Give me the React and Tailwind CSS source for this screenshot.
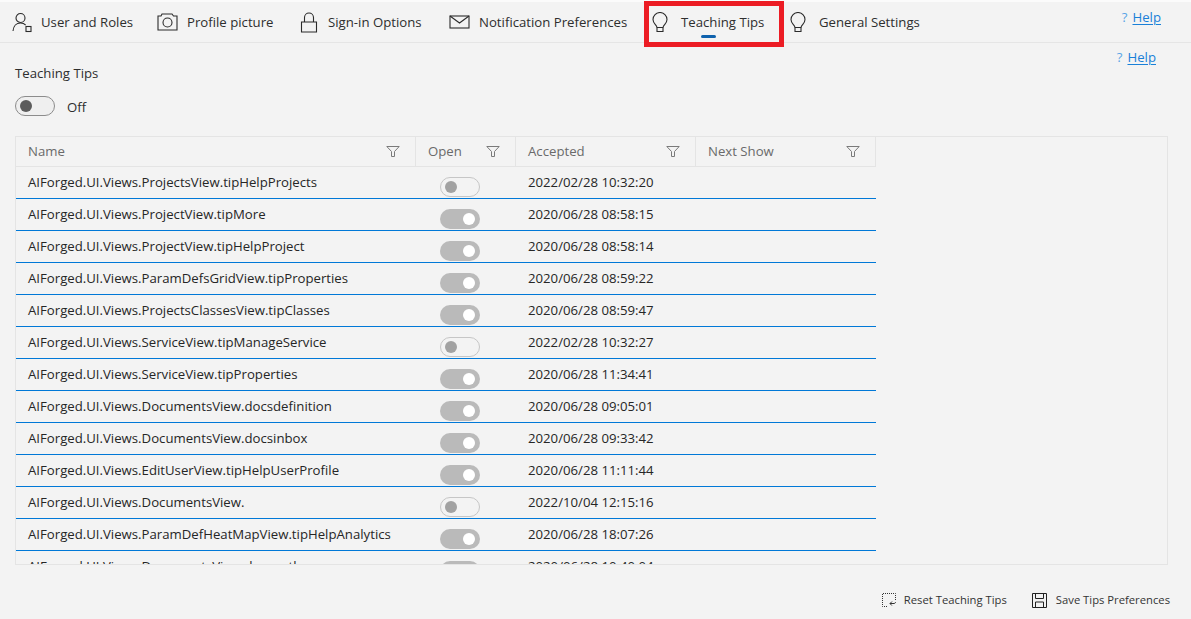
import React from "react";

const rows = [
  ["AIForged.UI.Views.ProjectsView.tipHelpProjects", false, "2022/02/28 10:32:20"],
  ["AIForged.UI.Views.ProjectView.tipMore", true, "2020/06/28 08:58:15"],
  ["AIForged.UI.Views.ProjectView.tipHelpProject", true, "2020/06/28 08:58:14"],
  ["AIForged.UI.Views.ParamDefsGridView.tipProperties", true, "2020/06/28 08:59:22"],
  ["AIForged.UI.Views.ProjectsClassesView.tipClasses", true, "2020/06/28 08:59:47"],
  ["AIForged.UI.Views.ServiceView.tipManageService", false, "2022/02/28 10:32:27"],
  ["AIForged.UI.Views.ServiceView.tipProperties", true, "2020/06/28 11:34:41"],
  ["AIForged.UI.Views.DocumentsView.docsdefinition", true, "2020/06/28 09:05:01"],
  ["AIForged.UI.Views.DocumentsView.docsinbox", true, "2020/06/28 09:33:42"],
  ["AIForged.UI.Views.EditUserView.tipHelpUserProfile", true, "2020/06/28 11:11:44"],
  ["AIForged.UI.Views.DocumentsView.", false, "2022/10/04 12:15:16"],
  ["AIForged.UI.Views.ParamDefHeatMapView.tipHelpAnalytics", true, "2020/06/28 18:07:26"],
  ["AIForged.UI.Views.DocumentsView.docsauth", true, "2020/06/28 10:40:04"],
];

const S = { fill: "none", stroke: "#2b2b2b", strokeWidth: 1.1 };

const UserIcon = () => (
  <svg width="21" height="21" viewBox="0 0 21 21" {...S}>
    <circle cx="8.5" cy="6" r="4.5" />
    <path d="M1 19c.4-4.8 3.4-8 7.5-8 2.2 0 4 .8 5.2 2.2" />
    <rect x="14" y="14.5" width="5" height="5" />
  </svg>
);
const CameraIcon = () => (
  <svg width="21" height="18" viewBox="0 0 21 18" {...S}>
    <path d="M1 3h3l1-2h10l1.500 2H20v14H1z" />
    <circle cx="10.500" cy="9.500" r="4.500" />
  </svg>
);
const LockIcon = () => (
  <svg width="18" height="21" viewBox="0 0 18 21" {...S}>
    <path d="M1.500 10h15v10h-15z" />
    <path d="M4.500 10V5.500a4.500 4.500 0 0 1 9 0V10" />
  </svg>
);
const MailIcon = () => (
  <svg width="21" height="14" viewBox="0 0 21 14" {...S}>
    <rect x="1" y="1" width="19" height="12" />
    <path d="M1 1l9.500 7L20 1" />
  </svg>
);
const BulbIcon = () => (
  <svg width="16" height="21" viewBox="0 0 16 21" {...S}>
    <path d="M5 15.500C4.500 12.500 1 11.500 1 7.500a7 7 0 0 1 14 0c0 4-3.500 5-4 8z" />
    <path d="M5 15.500V19.500h6V15.500" />
  </svg>
);
const FilterIcon = () => (
  <svg width="14" height="11" viewBox="0 0 14 11" fill="none" stroke="#7a7a7a" strokeWidth="1">
    <path d="M.8.500h12.400L8.500 5.500v5h-3v-5z" />
  </svg>
);
const ResetIcon = () => (
  <svg width="16" height="16" viewBox="0 0 16 16" fill="none" stroke="#333" strokeWidth="1">
    <path d="M6 14.500H1.500v-13h13V8" strokeDasharray="1 1" />
    <path d="M9 11.500h4c1 0 1.500-.7 1.500-1.500M9 11.500l2-2M9 11.500l1.800 2" />
  </svg>
);
const SaveIcon = () => (
  <svg width="15" height="15" viewBox="0 0 15 15" fill="none" stroke="#222" strokeWidth="1">
    <path d="M.5.500h14v14H.5z" />
    <path d="M3.500.500v5h8v-5M3.500 14.500v-5.500h8v5.500" />
  </svg>
);

function Tab({ icon, label, width, offset, active }) {
  return (
    <div className={`${width} relative flex h-full shrink-0 items-center`}>
      <div className={`${offset} flex shrink-0 items-center`}>{icon}</div>
      <span className="pt-[2px] text-[13.2px] whitespace-nowrap text-[#2e2e2e]">{label}</span>
      {active && <div className="absolute top-[33px] left-[49px] h-[3px] w-[15px] rounded-full bg-[#0f62ad]" />}
    </div>
  );
}

function HelpLink() {
  return (
    <span className="flex items-center gap-[5px] text-[13.2px]">
      <span className="text-[#5aa5e6]">?</span>
      <span className="text-[#1a80d8] underline underline-offset-2">Help</span>
    </span>
  );
}

function Toggle({ on }) {
  if (on) {
    return (
      <div className="flex h-5 w-10 items-center justify-end rounded-full bg-[#bababa] pr-[5px]">
        <div className="h-3 w-3 rounded-full bg-white" />
      </div>
    );
  }
  return (
    <div className="flex h-5 w-10 items-center rounded-full border border-[#c6c6c6] bg-[#f3f3f3] pl-[4px]">
      <div className="h-3 w-3 rounded-full bg-[#a2a2a2]" />
    </div>
  );
}

function Head({ label }) {
  return (
    <div className="flex h-[30px] items-center justify-between border-r border-b border-[#e4e4e4] pr-[15px] pl-3 text-[13.2px] text-[#6a6a6a]">
      <span className="pt-[2px]">{label}</span>
      <FilterIcon />
    </div>
  );
}

export default function App() {
  return (
    <div
      className="flex h-[619px] w-[1191px] flex-col overflow-hidden bg-[#f3f3f3] text-[#222]"
      style={{ fontFamily: '"Open Sans", "Noto Sans", sans-serif' }}
    >
      <div className="h-[2px] shrink-0 bg-[#fbfbfb]" />
      <div className="relative flex h-[41px] shrink-0 items-center border-b border-[#e5e5e5] pl-3">
        <Tab width="w-[145px]" offset="w-[29px]" icon={<UserIcon />} label="User and Roles" />
        <Tab width="w-[143px]" offset="w-[30px]" icon={<CameraIcon />} label="Profile picture" />
        <Tab width="w-[149px]" offset="w-[28px]" icon={<LockIcon />} label="Sign-in Options" />
        <Tab width="w-[203px]" offset="w-[30px]" icon={<MailIcon />} label="Notification Preferences" />
        <Tab width="w-[138px]" offset="w-[29px]" icon={<BulbIcon />} label="Teaching Tips" active />
        <Tab width="w-[200px]" offset="w-[29px]" icon={<BulbIcon />} label="General Settings" />
        <div className="ml-auto pr-[30px] pb-2">
          <HelpLink />
        </div>
        <div className="absolute top-[-1px] left-[644px] h-[46px] w-[140px] border-[5px] border-[#ec1c24]" />
      </div>

      <div className="flex min-h-0 flex-1 flex-col">
        <div className="flex justify-end pt-[5px] pr-[35px]">
          <HelpLink />
        </div>
        <div className="mt-[-4px] pl-[15px] text-[13.2px] text-[#2e2e2e]">Teaching Tips</div>
        <div className="mt-[12px] flex h-5 items-start gap-3 pl-[15px]">
          <div className="flex h-5 w-10 items-center rounded-full border border-[#8c8c8c] bg-[#efefef] pl-1">
            <div className="h-3 w-3 rounded-full bg-[#5c5c5c]" />
          </div>
          <span className="mt-[1px] text-[13.2px] leading-5 text-[#2e2e2e]">Off</span>
        </div>

        <div className="mx-[15px] mt-[20px] h-[429px] w-[1153px] shrink-0 overflow-hidden border border-[#e4e4e4]">
          <div className="grid w-[860px] grid-cols-[400px_100px_180px_180px]">
            <Head label="Name" />
            <Head label="Open" />
            <Head label="Accepted" />
            <Head label="Next Show" />
            {rows.map(([name, on, date]) => (
              <div key={name} className="col-span-4 flex h-8 items-start border-b border-b-[#0078d7] text-[13.2px] whitespace-nowrap text-[#262626]">
                <div className="w-[400px] pt-[6px] pl-3">{name}</div>
                <div className="w-[100px] pt-[10px] pl-[24px]"><Toggle on={on} /></div>
                <div className="w-[180px] pt-[6px] pl-3">{date}</div>
              </div>
            ))}
          </div>
        </div>

        <div className="flex flex-1 items-start justify-end gap-[25px] pt-[27px] pr-[21px]">
          <div className="flex items-center gap-[7px] text-[11.25px] text-[#333]"><ResetIcon /><span>Reset Teaching Tips</span></div>
          <div className="flex items-center gap-[9px] text-[11.25px] text-[#333]"><SaveIcon /><span>Save Tips Preferences</span></div>
        </div>
      </div>
    </div>
  );
}
